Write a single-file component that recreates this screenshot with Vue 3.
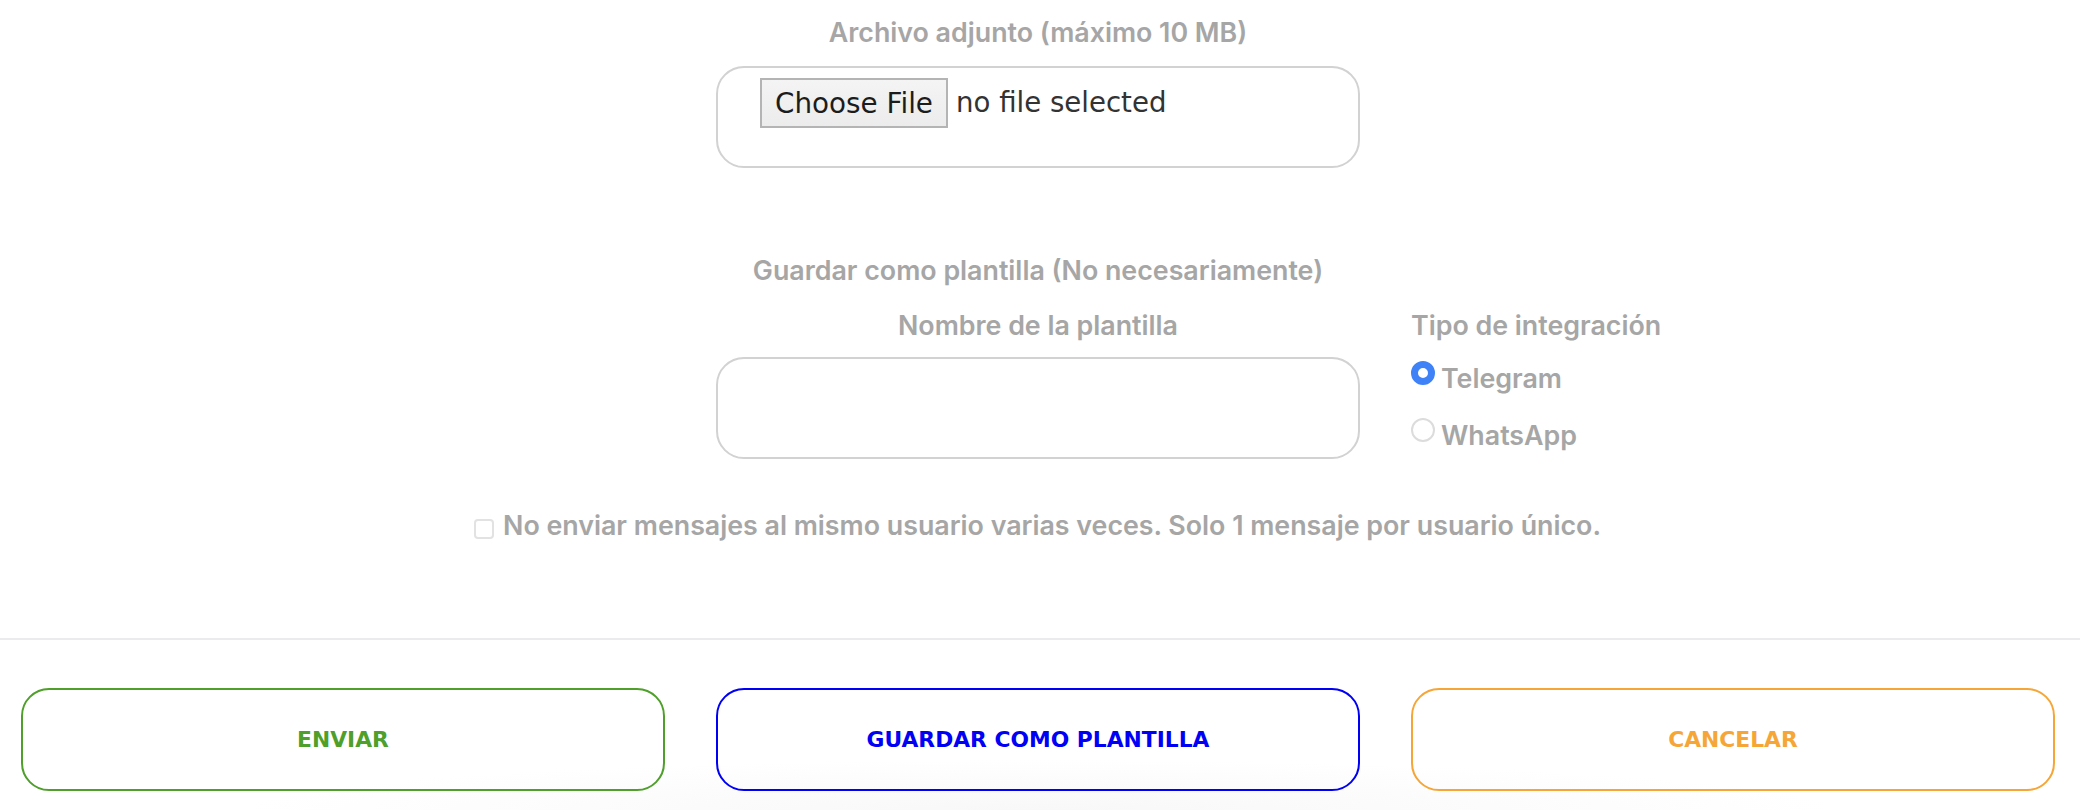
<script setup>
const actions = [
  { label: 'ENVIAR', tone: 'green' },
  { label: 'GUARDAR COMO PLANTILLA', tone: 'blue' },
  { label: 'CANCELAR', tone: 'orange' },
]
</script>

<template>
  <main class="page">
    <section class="form">
      <div class="center-col">
        <label class="label first">Archivo adjunto (máximo 10 MB)</label>
        <div class="field file-field">
          <button class="file-btn" type="button">Choose File</button>
          <span class="file-name">no file selected</span>
        </div>
      </div>

      <div class="center-col template-title">
        <span class="label">Guardar como plantilla (No necesariamente)</span>
      </div>

      <div class="template-row">
        <div class="name-col">
          <label class="label">Nombre de la plantilla</label>
          <div class="field"></div>
        </div>
        <div class="type-col">
          <span class="label">Tipo de integración</span>
          <div class="option one"><span class="radio on"></span><span class="label">Telegram</span></div>
          <div class="option two"><span class="radio"></span><span class="label">WhatsApp</span></div>
        </div>
      </div>

      <div class="unique-row">
        <span class="check"></span>
        <span class="label">No enviar mensajes al mismo usuario varias veces. Solo 1 mensaje por usuario único.</span>
      </div>
    </section>

    <footer class="footer">
      <button v-for="a in actions" :key="a.label" type="button" class="action" :class="a.tone">{{ a.label }}</button>
    </footer>
  </main>
</template>

<style scoped>
.page {
  width: 2080px;
  height: 810px;
  overflow: hidden;
  background: #fff;
  font-family: Inter, "Liberation Sans", sans-serif;
}
.form {
  height: 640px;
  box-sizing: border-box;
  border-bottom: 2px solid #ebebed;
  padding-top: 18px;
}
.center-col {
  width: 644px;
  margin-left: 716px;
  display: flex;
  flex-direction: column;
  align-items: center;
}
.label {
  font-size: 26.8px;
  line-height: 28px;
  font-weight: 600;
  color: #a6a6a6;
  white-space: nowrap;
}
.field {
  box-sizing: border-box;
  width: 644px;
  height: 102px;
  border: 2px solid #d2d2d2;
  border-radius: 28px;
  background: #fff;
}
.first + .field {
  margin-top: 20px;
}
.file-field {
  display: flex;
  align-items: flex-start;
  padding: 10px 0 0 42px;
}
.file-btn {
  box-sizing: border-box;
  width: 188px;
  height: 50px;
  padding: 0;
  border: 2px solid #b4b4b4;
  background: linear-gradient(#f4f4f4, #ececec);
  color: #1c1c1c;
  font-family: "DejaVu Sans", sans-serif;
  font-size: 27.8px;
}
.file-name {
  margin-left: 8px;
  line-height: 50px;
  color: #333;
  font-family: "DejaVu Sans", sans-serif;
  font-size: 27.6px;
}
.template-title {
  margin-top: 88px;
}
.template-row {
  display: flex;
  margin-top: 27px;
  margin-left: 716px;
  gap: 51px;
}
.name-col {
  width: 644px;
  display: flex;
  flex-direction: column;
  align-items: center;
  gap: 18px;
}
.type-col {
  display: flex;
  flex-direction: column;
}
.option {
  display: flex;
  align-items: flex-start;
  gap: 6px;
}
.one { margin-top: 25px; }
.two { margin-top: 29px; }
.radio {
  box-sizing: border-box;
  width: 24px;
  height: 24px;
  margin-top: -3px;
  border: 2px solid #dcdcdc;
  border-radius: 50%;
  background: #fff;
}
.radio.on {
  border: 7px solid #3f82f7;
}
.unique-row {
  display: flex;
  justify-content: center;
  align-items: center;
  gap: 9px;
  margin-top: 52px;
  margin-left: -5px;
}
.check {
  box-sizing: border-box;
  width: 20px;
  height: 20px;
  margin-top: 7px;
  border: 2px solid #e2e2e2;
  border-radius: 4px;
}
.footer {
  display: grid;
  grid-template-columns: repeat(3, 644px);
  gap: 51px;
  padding: 48px 0 0 21px;
  height: 170px;
  box-sizing: border-box;
  background: radial-gradient(ellipse 800px 50px at 50% 100%, #f8f8f8, #fff);
}
.action {
  box-sizing: border-box;
  height: 103px;
  padding: 0;
  background: transparent;
  border: 2px solid;
  border-radius: 28px;
  font-family: "DejaVu Sans", sans-serif;
  font-size: 21.8px;
  font-weight: 700;
}
.green { color: #4f9f2b; border-color: #4f9f2b; }
.blue { color: #0000f5; border-color: #0000f5; }
.orange { color: #f5a637; border-color: #f5a637; }
</style>

<style>
body { margin: 0; }
</style>
